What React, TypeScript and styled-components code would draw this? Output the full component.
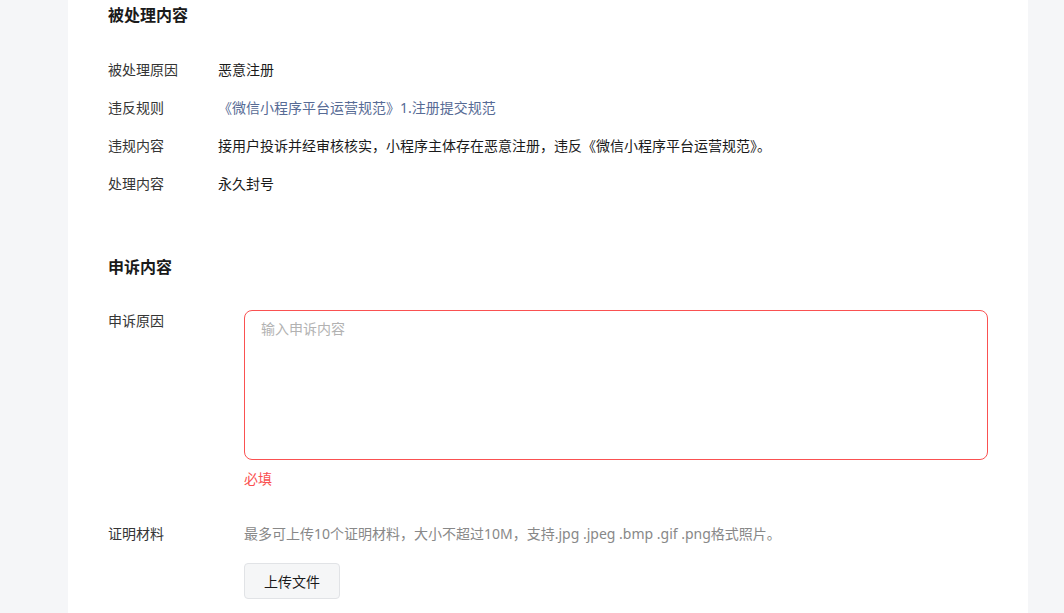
import styled, { createGlobalStyle } from "styled-components";

const GlobalStyle = createGlobalStyle`
  html, body {
    margin: 0;
    padding: 0;
    background: #f5f6f8;
  }
  body {
    font-family: "Noto Sans", "Noto Sans CJK SC", sans-serif;
    -webkit-font-smoothing: antialiased;
  }
`;

const Page = styled.div`
  height: 613px;
  overflow: hidden;
  padding-left: 68px;
`;

const Panel = styled.div`
  width: 960px;
  min-height: 613px;
  box-sizing: border-box;
  background: #ffffff;
  padding: 3px 40px 0;
`;

const SectionTitle = styled.h3<{ $gap?: number }>`
  margin: ${(p) => p.$gap ?? 0}px 0 0;
  font-size: 16px;
  line-height: 24px;
  font-weight: 700;
  color: #1a1a1a;
`;

const InfoList = styled.div`
  margin-top: 24px;
  display: flex;
  flex-direction: column;
`;

const InfoRow = styled.div`
  display: flex;
  padding: 8px 0;
  font-size: 14px;
  line-height: 22px;
`;

const InfoLabel = styled.div`
  width: 110px;
  flex-shrink: 0;
  color: #353535;
`;

const InfoValue = styled.div<{ $link?: boolean }>`
  color: ${(p) => (p.$link ? "#576b95" : "#1a1a1a")};
`;

const FormRow = styled.div<{ $gap: number }>`
  display: flex;
  margin-top: ${(p) => p.$gap}px;
  font-size: 14px;
  line-height: 22px;
`;

const FormLabel = styled.div`
  width: 136px;
  flex-shrink: 0;
  color: #353535;
`;

const FormBody = styled.div`
  flex: 1;
  display: flex;
  flex-direction: column;
  align-items: flex-start;
`;

const TextArea = styled.textarea`
  width: 100%;
  height: 150px;
  box-sizing: border-box;
  border: 1px solid #fa5151;
  border-radius: 8px;
  padding: 8px 16px;
  font-family: inherit;
  font-size: 14px;
  line-height: 20px;
  color: #1a1a1a;
  resize: none;
  outline: none;
  &::placeholder {
    color: #b2b2b2;
  }
`;

const ErrorTip = styled.div`
  margin-top: 8px;
  color: #fa5151;
  font-size: 14px;
  line-height: 22px;
`;

const Hint = styled.div`
  color: #888888;
`;

const UploadButton = styled.button`
  margin-top: 18px;
  width: 96px;
  height: 36px;
  box-sizing: border-box;
  border: 1px solid #e1e3e6;
  border-radius: 4px;
  background: #f5f6f7;
  font-family: inherit;
  font-size: 14px;
  color: #1a1a1a;
  cursor: pointer;
`;

const punishInfo = [
  { label: "被处理原因", value: "恶意注册" },
  { label: "违反规则", value: "《微信小程序平台运营规范》1.注册提交规范", link: true },
  {
    label: "违规内容",
    value: "接用户投诉并经审核核实，小程序主体存在恶意注册，违反《微信小程序平台运营规范》。",
  },
  { label: "处理内容", value: "永久封号" },
];

export default function App() {
  return (
    <>
      <GlobalStyle />
      <Page>
        <Panel>
          <SectionTitle>被处理内容</SectionTitle>
          <InfoList>
            {punishInfo.map((item) => (
              <InfoRow key={item.label}>
                <InfoLabel>{item.label}</InfoLabel>
                <InfoValue $link={item.link}>{item.value}</InfoValue>
              </InfoRow>
            ))}
          </InfoList>

          <SectionTitle $gap={52}>申诉内容</SectionTitle>
          <FormRow $gap={31}>
            <FormLabel>申诉原因</FormLabel>
            <FormBody>
              <TextArea placeholder="输入申诉内容" />
              <ErrorTip>必填</ErrorTip>
            </FormBody>
          </FormRow>
          <FormRow $gap={33}>
            <FormLabel>证明材料</FormLabel>
            <FormBody>
              <Hint>最多可上传10个证明材料，大小不超过10M，支持.jpg .jpeg .bmp .gif .png格式照片。</Hint>
              <UploadButton>上传文件</UploadButton>
            </FormBody>
          </FormRow>
        </Panel>
      </Page>
    </>
  );
}
